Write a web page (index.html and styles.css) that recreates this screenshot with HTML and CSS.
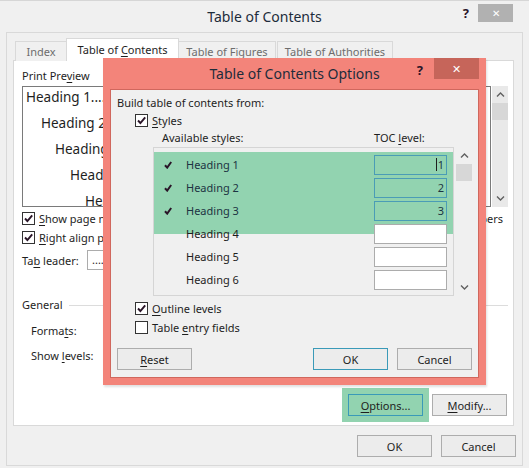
FILE: index.html
```html
<!DOCTYPE html>
<html lang="en">
<head>
    <meta charset="UTF-8">
    <title>Table of Contents</title>
    <link rel="stylesheet" href="styles.css">
</head>
<body>
    <div class="window">
        <div class="topline"></div>
        <header class="titlebar">
            <div></div>
            <div class="title">Table of Contents</div>
            <div class="controls">
                <span class="help">?</span>
                <span class="close">&#10005;</span>
            </div>
        </header>

        <div class="frame">
            <div class="tabs">
                <span class="tab tab-index">Index</span>
                <span class="tab tab-toc active">Table of <u>C</u>ontents</span>
                <span class="tab tab-fig">Table of Figures</span>
                <span class="tab tab-auth">Table of Authorities</span>
            </div>

            <section class="panel">
                <div class="previews">
                    <div class="col col-print">
                        <div class="group-label">Print Pre<u>v</u>iew</div>
                        <div class="print-preview">
                            <div class="pv-line lvl1">Heading 1.............................................1</div>
                            <div class="pv-line lvl2">Heading 2.......................................3</div>
                            <div class="pv-line lvl3">Heading 3...............................5</div>
                            <div class="pv-line lvl4">Heading 4........................7</div>
                            <div class="pv-line lvl5">Heading 5..................9</div>
                        </div>
                        <div class="check-row first">
                            <span class="checkbox"><svg viewBox="0 0 11 11"><path d="M2 5.5 L4.4 8 L9.2 2.4"/></svg></span>
                            <span><u>S</u>how page numbers</span>
                        </div>
                        <div class="check-row">
                            <span class="checkbox"><svg viewBox="0 0 11 11"><path d="M2 5.5 L4.4 8 L9.2 2.4"/></svg></span>
                            <span><u>R</u>ight align page numbers</span>
                        </div>
                        <div class="leader-row">
                            <span class="leader-label">Ta<u>b</u> leader:</span>
                            <span class="select">.......</span>
                        </div>
                    </div>

                    <div class="col col-web">
                        <div class="group-label">We<u>b</u> Preview</div>
                        <div class="web-preview">
                            <div class="web-box"></div>
                            <div class="vscroll">
                                <span class="arrow"><svg viewBox="0 0 9 5"><path d="M1 4.5 L4.5 1 L8 4.5"/></svg></span>
                                <span class="thumb"></span>
                                <span class="track"></span>
                                <span class="arrow"><svg viewBox="0 0 9 5"><path d="M1 0.5 L4.5 4 L8 0.5"/></svg></span>
                            </div>
                        </div>
                        <div class="check-row first right">
                            <span class="checkbox"><svg viewBox="0 0 11 11"><path d="M2 5.5 L4.4 8 L9.2 2.4"/></svg></span>
                            <span>Use <u>h</u>yperlinks instead of page numbers</span>
                        </div>
                    </div>
                </div>

                <div class="general">
                    <div class="section-head"><span>General</span><span class="rule"></span></div>
                    <div class="field-row first">Forma<u>t</u>s:</div>
                    <div class="field-row">Show <u>l</u>evels:</div>
                </div>

                <div class="panel-buttons">
                    <button class="btn btn-focus marked"><u>O</u>ptions...</button>
                    <button class="btn"><u>M</u>odify...</button>
                </div>
            </section>

            <div class="footer">
                <button class="btn">OK</button>
                <button class="btn">Cancel</button>
            </div>
        </div>

        <!-- dialog opened on top of the main one -->
        <div class="options-dialog">
            <header class="opt-titlebar">
                <div></div>
                <div class="opt-title">Table of Contents Options</div>
                <div class="opt-controls">
                    <span class="help">?</span>
                    <span class="opt-close">&#10005;</span>
                </div>
            </header>
            <div class="opt-body">
                <div class="opt-label">Build table of contents from:</div>
                <div class="check-row opt-check">
                    <span class="checkbox"><svg viewBox="0 0 11 11"><path d="M2 5.5 L4.4 8 L9.2 2.4"/></svg></span>
                    <span><u>S</u>tyles</span>
                </div>
                <div class="list-head">
                    <span class="avail">Available styles:</span>
                    <span>TOC <u>l</u>evel:</span>
                </div>
                <div class="list-wrap">
                    <div class="style-list">
                        <div class="mark"></div>
                        <div class="style-row on">
                            <span class="tick"><svg viewBox="0 0 8 8"><path d="M1 4.2 L3.2 6.6 L7.2 1"/></svg></span>
                            <span class="style-name">Heading 1</span>
                            <span class="level"><span class="caret"></span>1</span>
                        </div>
                        <div class="style-row on">
                            <span class="tick"><svg viewBox="0 0 8 8"><path d="M1 4.2 L3.2 6.6 L7.2 1"/></svg></span>
                            <span class="style-name">Heading 2</span>
                            <span class="level">2</span>
                        </div>
                        <div class="style-row on">
                            <span class="tick"><svg viewBox="0 0 8 8"><path d="M1 4.2 L3.2 6.6 L7.2 1"/></svg></span>
                            <span class="style-name">Heading 3</span>
                            <span class="level">3</span>
                        </div>
                        <div class="style-row">
                            <span class="tick"></span>
                            <span class="style-name">Heading 4</span>
                            <span class="level"></span>
                        </div>
                        <div class="style-row">
                            <span class="tick"></span>
                            <span class="style-name">Heading 5</span>
                            <span class="level"></span>
                        </div>
                        <div class="style-row">
                            <span class="tick"></span>
                            <span class="style-name">Heading 6</span>
                            <span class="level"></span>
                        </div>
                    </div>
                    <div class="vscroll list-scroll">
                        <span class="arrow"><svg viewBox="0 0 9 5"><path d="M1 4.5 L4.5 1 L8 4.5"/></svg></span>
                        <span class="thumb"></span>
                        <span class="track"></span>
                        <span class="arrow"><svg viewBox="0 0 9 5"><path d="M1 0.5 L4.5 4 L8 0.5"/></svg></span>
                    </div>
                </div>
                <div class="check-row opt-check outline">
                    <span class="checkbox"><svg viewBox="0 0 11 11"><path d="M2 5.5 L4.4 8 L9.2 2.4"/></svg></span>
                    <span><u>O</u>utline levels</span>
                </div>
                <div class="check-row opt-check">
                    <span class="checkbox empty"></span>
                    <span>Table <u>e</u>ntry fields</span>
                </div>
                <div class="opt-buttons">
                    <button class="btn"><u>R</u>eset</button>
                    <span class="spacer"></span>
                    <button class="btn btn-focus">OK</button>
                    <button class="btn">Cancel</button>
                </div>
            </div>
        </div>
    </div>
</body>
</html>
```

FILE: styles.css
```css
body {
    margin: 0;
    background-color: #f0f0f0;
    font-family: 'Noto Sans', 'Open Sans', sans-serif;
    font-size: 11px;
    color: #1e1e1e;
}
u {
    text-underline-offset: 2px;
}
.window {
    position: relative;
    width: 529px;
    height: 468px;
    overflow: hidden;
}
.topline {
    height: 1px;
    background-color: #d6d6d6;
}

/* title bars */
.titlebar, .opt-titlebar {
    display: grid;
    grid-template-columns: 1fr auto 1fr;
    height: 31px;
}
.title, .opt-title {
    font-size: 14px;
    line-height: 31px;
    color: #1d2c3a;
}
.controls {
    display: flex;
    justify-content: flex-end;
    align-items: flex-start;
    padding-right: 16px;
}
.help {
    font-weight: bold;
    font-size: 13px;
    line-height: 14px;
    margin-top: 5px;
    margin-right: 9px;
    color: #2a1528;
}
.close {
    width: 35px;
    height: 18px;
    margin-top: 3px;
    background-color: #b1b1b1;
    color: #fff;
    font-size: 10px;
    display: flex;
    align-items: center;
    justify-content: center;
}

/* main frame */
.frame {
    margin: 0 6px;
    height: 434px;
    box-sizing: border-box;
    border: 1px solid #d9d9d9;
    padding: 6px 8px 0 6px;
}
.tabs {
    display: flex;
    align-items: flex-end;
    height: 22px;
    padding-left: 2px;
    margin-bottom: -1px;
    position: relative;
}
.tab {
    height: 20px;
    box-sizing: border-box;
    border: 1px solid #d9d9d9;
    border-bottom: none;
    margin-right: -1px;
    text-align: center;
    line-height: 19px;
    color: #6d6d6d;
    background-color: #f0f0f0;
}
.tab-index { width: 52px; }
.tab-toc { width: 113px; }
.tab-fig { width: 98px; }
.tab-auth { width: 116px; margin-left: 2px; }
.tab.active {
    height: 23px;
    background-color: #fff;
    color: #1e1e1e;
    line-height: 22px;
}

.panel {
    height: 366px;
    box-sizing: border-box;
    background-color: #fff;
    border: 1px solid #d9d9d9;
    padding: 7px 5px 9px 8px;
    display: flex;
    flex-direction: column;
}
.previews {
    display: flex;
    justify-content: space-between;
}
.col-print {
    width: 235px;
}
.col-web {
    width: 240px;
}
.group-label {
    line-height: 16px;
}
.print-preview {
    margin-top: 2px;
    height: 121px;
    box-sizing: border-box;
    border: 1px solid #7a7a7a;
    padding-left: 3px;
    overflow: hidden;
    white-space: nowrap;
    font-size: 13.5px;
}
.pv-line {
    height: 26px;
    line-height: 20px;
}
.lvl2 { margin-left: 15px; }
.lvl3 { margin-left: 29px; }
.lvl4 { margin-left: 44px; }
.lvl5 { margin-left: 59px; }

.check-row {
    display: flex;
    align-items: center;
    height: 19px;
    gap: 4px;
    white-space: nowrap;
}
.check-row.first {
    margin-top: 2px;
}
.check-row.right {
    justify-content: flex-end;
    padding-right: 5px;
}
.checkbox {
    width: 13px;
    height: 13px;
    box-sizing: border-box;
    border: 1px solid #333;
    background-color: #fff;
    flex-shrink: 0;
}
.checkbox svg {
    display: block;
    width: 11px;
    height: 11px;
}
.checkbox path {
    fill: none;
    stroke: #2a1528;
    stroke-width: 1.9;
}
.leader-row {
    display: flex;
    align-items: center;
    margin-top: 3px;
    height: 20px;
}
.leader-label {
    width: 65px;
}
.select {
    width: 140px;
    height: 20px;
    box-sizing: border-box;
    border: 1px solid #acacac;
    padding-left: 4px;
    line-height: 17px;
}

.web-preview {
    display: flex;
    margin-top: 2px;
    height: 121px;
}
.web-box {
    flex: 1;
    border: 1px solid #7a7a7a;
}
.vscroll {
    width: 16px;
    display: flex;
    flex-direction: column;
    margin-left: 1px;
    background-color: #e9e9e9;
}
.vscroll .arrow {
    height: 17px;
    display: flex;
    align-items: center;
    justify-content: center;
}
.vscroll svg {
    width: 9px;
    height: 5px;
}
.vscroll path {
    fill: none;
    stroke: #606060;
    stroke-width: 1.4;
}
.vscroll .thumb {
    height: 17px;
    background-color: #d7d7d7;
}
.vscroll .track {
    flex: 1;
}

.general {
    margin-top: 27px;
}
.section-head {
    display: flex;
    align-items: center;
    gap: 6px;
    line-height: 16px;
}
.rule {
    flex: 1;
    border-top: 1px solid #dcdcdc;
}
.field-row {
    height: 25px;
    line-height: 25px;
    padding-left: 9px;
}
.field-row.first {
    margin-top: 5px;
}
.panel-buttons {
    margin-top: auto;
    display: flex;
    justify-content: flex-end;
    gap: 9px;
    padding-right: 1px;
}

.btn {
    width: 75px;
    height: 22px;
    box-sizing: border-box;
    border: 1px solid #adadad;
    background-color: #ececec;
    font: inherit;
    color: #1e1e1e;
    padding: 0;
}
.btn-focus {
    border-color: #3a9ab8;
}
.btn.marked {
    background-color: #92d3b0;
    box-shadow: 0 0 0 6px #92d3b0;
}
.footer {
    display: flex;
    justify-content: flex-end;
    gap: 9px;
    margin-top: 9px;
    margin-right: -2px;
}

/* options dialog */
.options-dialog {
    position: absolute;
    left: 103px;
    top: 58px;
    width: 383px;
    height: 327px;
    box-sizing: border-box;
    padding: 0 7px 7px 7px;
    background-color: #f3847a;
    box-shadow: 1px 2px 2px rgba(0,0,0,0.12);
    display: flex;
    flex-direction: column;
}
.opt-controls {
    display: flex;
    justify-content: flex-end;
    align-items: flex-start;
}
.opt-controls .help {
    margin-right: 11px;
}
.opt-close {
    width: 45px;
    height: 21px;
    background-color: #c6655a;
    color: #fff;
    font-size: 11px;
    display: flex;
    align-items: center;
    justify-content: center;
}
.opt-body {
    flex: 1;
    border: 1px solid #d0675d;
    background-color: #f0f0f0;
    padding: 5px 6px 7px 6px;
    display: flex;
    flex-direction: column;
}
.opt-label {
    line-height: 16px;
}
.opt-check {
    padding-left: 18px;
}
.list-head {
    display: flex;
    line-height: 16px;
}
.avail {
    width: 212px;
    padding-left: 45px;
}
.list-wrap {
    display: flex;
    margin-top: 1px;
    height: 149px;
}
.style-list {
    position: relative;
    width: 301px;
    margin-left: 36px;
    box-sizing: border-box;
    border: 1px solid #d5d5d5;
    padding-top: 5px;
}
.mark {
    position: absolute;
    left: 0;
    right: 0;
    top: 4px;
    height: 82px;
    background-color: #92d3b0;
}
.style-row {
    position: relative;
    display: flex;
    align-items: center;
    height: 23px;
    padding-left: 10px;
}
.style-row.on {
    color: #1c3343;
}
.tick {
    width: 8px;
    height: 8px;
    margin-right: 14px;
}
.tick svg {
    display: block;
    width: 8px;
    height: 8px;
}
.tick path {
    fill: none;
    stroke: #2a1528;
    stroke-width: 2;
}
.level {
    margin-left: auto;
    margin-right: 6px;
    width: 73px;
    height: 20px;
    box-sizing: border-box;
    border: 1px solid #acacac;
    background-color: #fff;
    text-align: right;
    padding-right: 2px;
    line-height: 18px;
}
.style-row.on .level {
    border-color: #4a9cb6;
    background-color: transparent;
}
.caret {
    display: inline-block;
    width: 1px;
    height: 13px;
    background-color: #1e1e1e;
    vertical-align: -2px;
    margin-right: 1px;
}
.list-scroll {
    margin-left: 2px;
    background-color: #f0f0f0;
}
.check-row.outline {
    margin-top: 3px;
}
.opt-buttons {
    margin-top: auto;
    display: flex;
    gap: 9px;
}
.opt-buttons .spacer {
    flex: 1;
}
```
